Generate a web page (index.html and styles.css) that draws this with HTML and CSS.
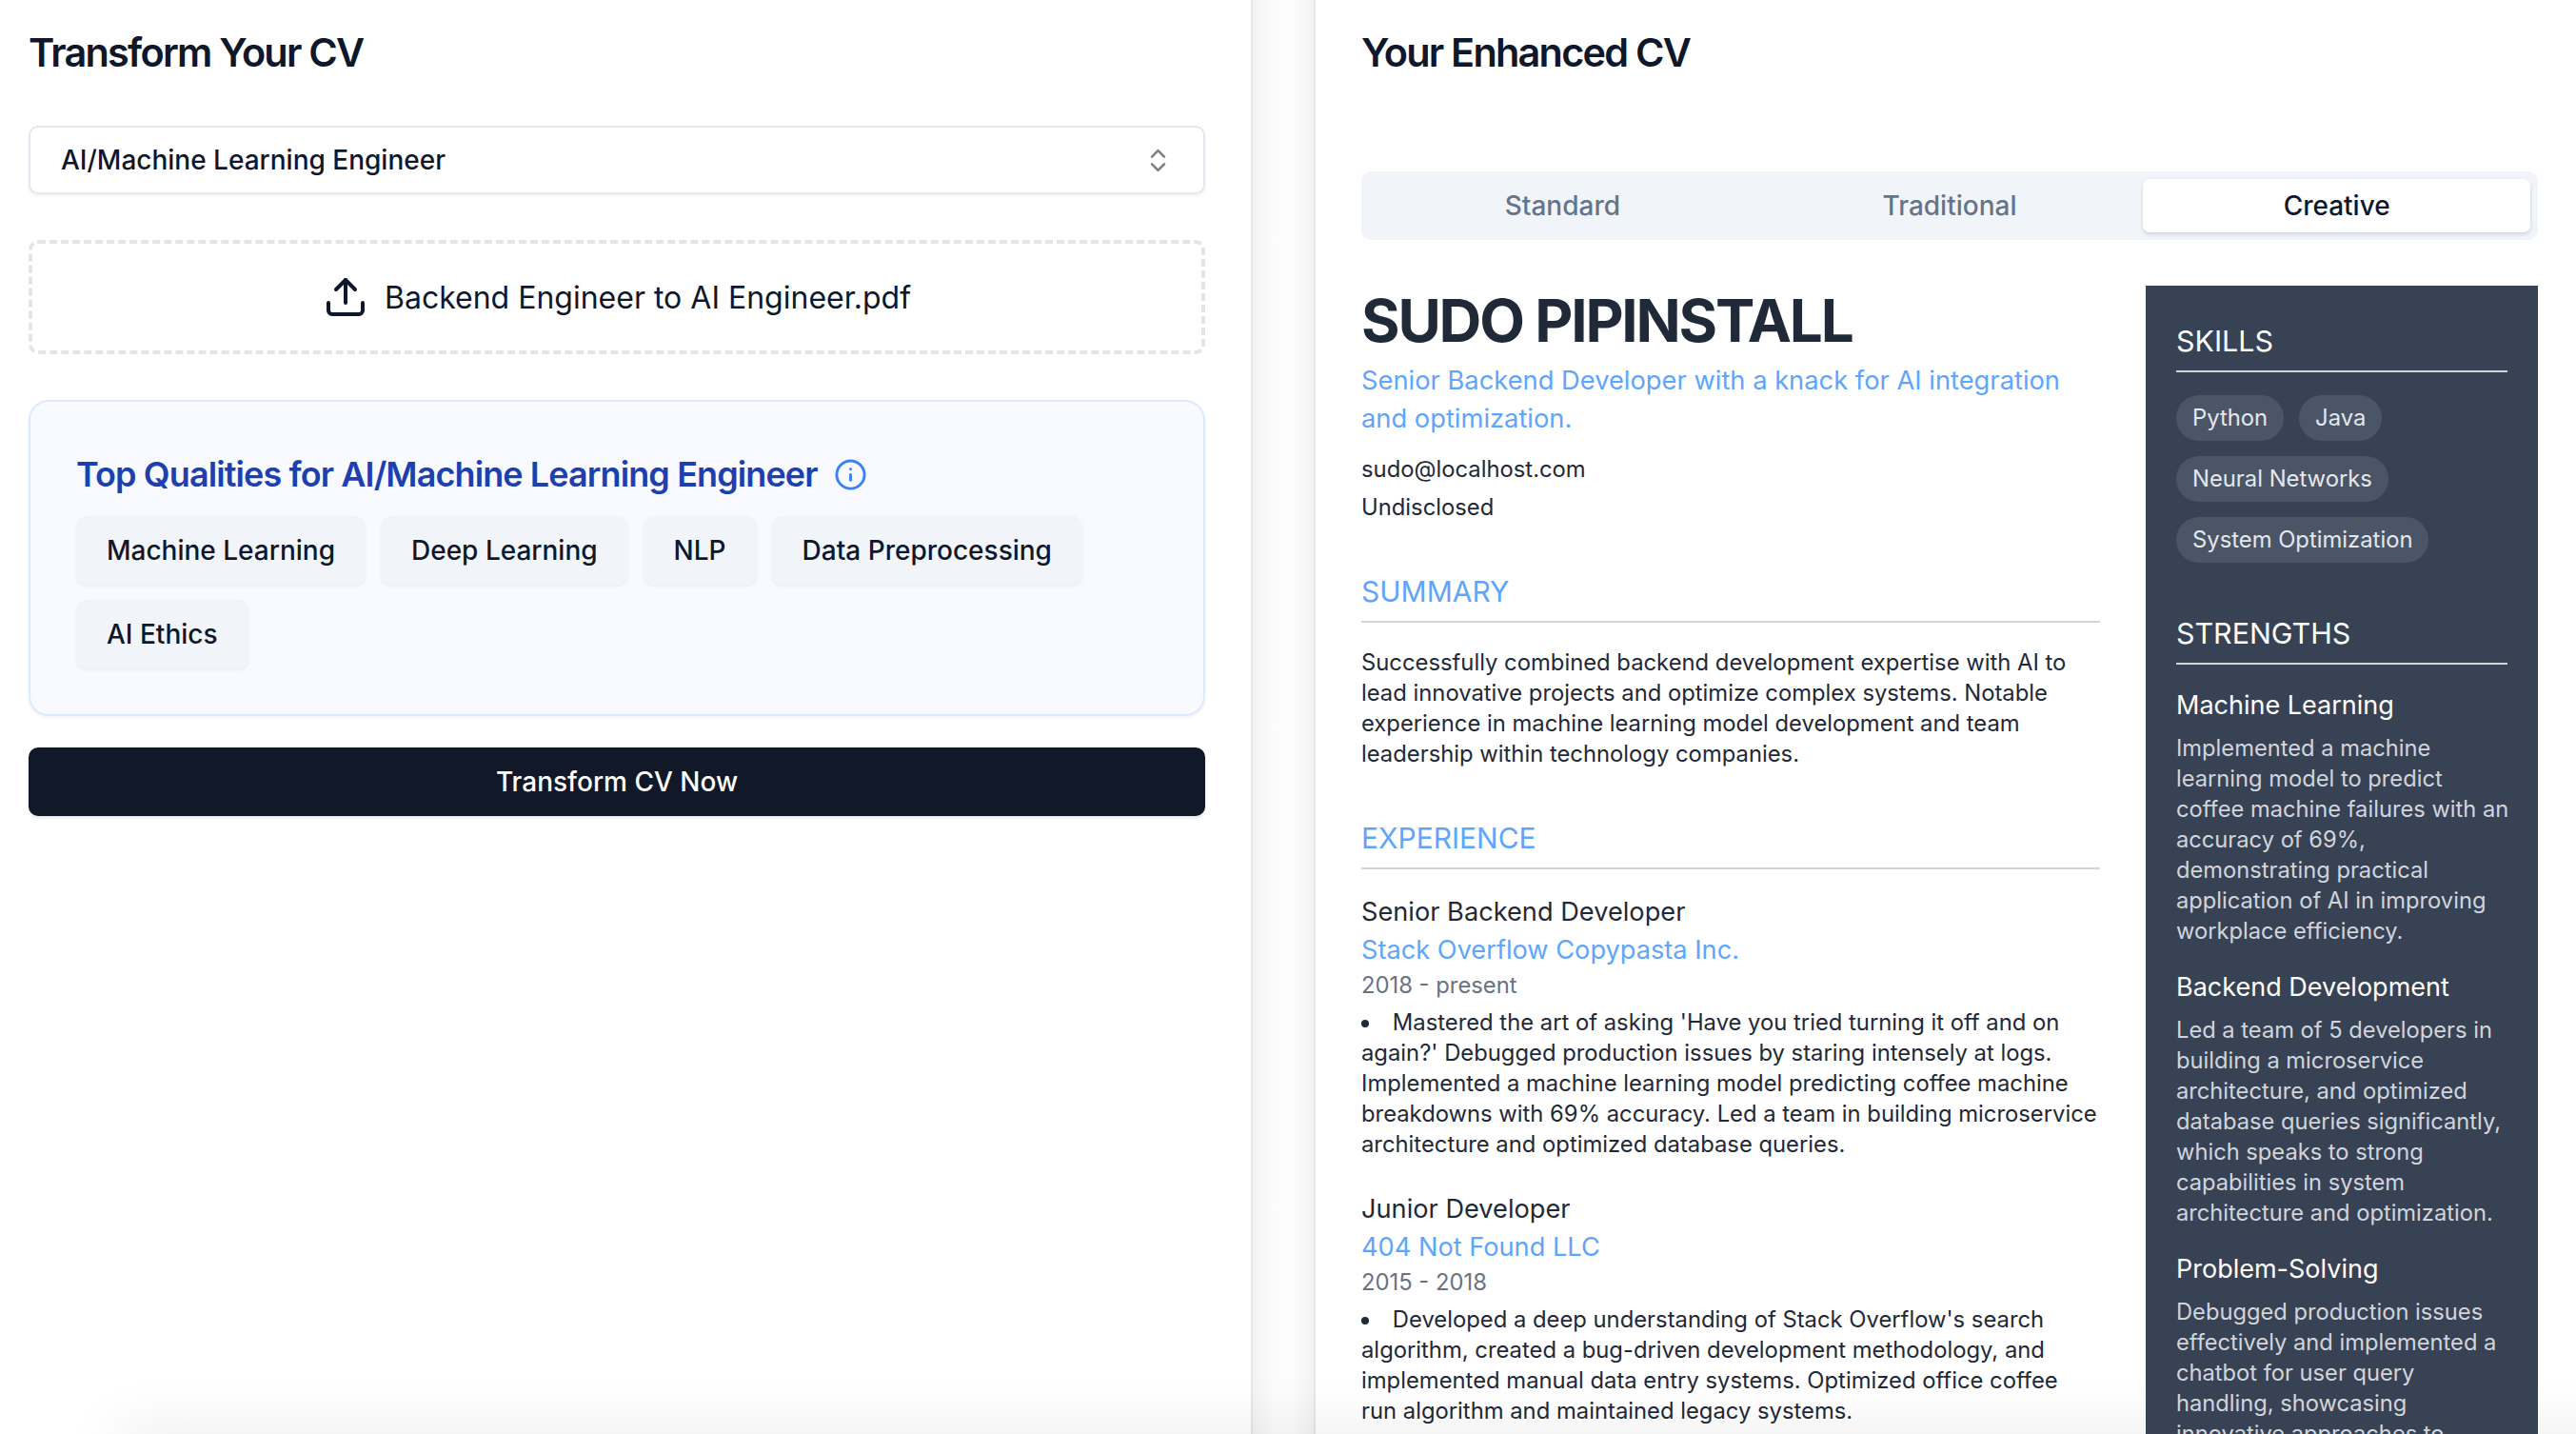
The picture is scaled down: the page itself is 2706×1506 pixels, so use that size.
FILE: index.html
```html
<!DOCTYPE html>
<html lang="en">
<head>
    <meta charset="UTF-8">
    <meta name="viewport" content="width=device-width, initial-scale=1.0">
    <title>Transform Your CV</title>
    <link rel="stylesheet" href="styles.css">
</head>
<body>

<div class="app">

    <!-- Input panel -->
    <section class="panel panel-left">
        <h2 class="panel-title">Transform Your CV</h2>

        <div class="role-select">
            <span>AI/Machine Learning Engineer</span>
            <svg class="icon-chevrons" viewBox="0 0 24 24" fill="none" stroke="currentColor" stroke-width="2" stroke-linecap="round" stroke-linejoin="round">
                <path d="m7 15 5 5 5-5"/>
                <path d="m7 9 5-5 5 5"/>
            </svg>
        </div>

        <div class="upload-box">
            <svg class="icon-upload" viewBox="0 0 24 24" fill="none" stroke="currentColor" stroke-width="2" stroke-linecap="round" stroke-linejoin="round">
                <path d="M21 15v4a2 2 0 0 1-2 2H5a2 2 0 0 1-2-2v-4"/>
                <polyline points="17 8 12 3 7 8"/>
                <line x1="12" y1="3" x2="12" y2="15"/>
            </svg>
            <span>Backend Engineer to AI Engineer.pdf</span>
        </div>

        <div class="qualities">
            <div class="qualities-head">
                <h3>Top Qualities for AI/Machine Learning Engineer</h3>
                <svg class="icon-info" viewBox="0 0 24 24" fill="none" stroke="currentColor" stroke-width="2" stroke-linecap="round" stroke-linejoin="round">
                    <circle cx="12" cy="12" r="10"/>
                    <path d="M12 16v-4"/>
                    <path d="M12 8h.01"/>
                </svg>
            </div>
            <div class="chips">
                <span class="chip">Machine Learning</span>
                <span class="chip">Deep Learning</span>
                <span class="chip">NLP</span>
                <span class="chip">Data Preprocessing</span>
                <span class="chip">AI Ethics</span>
            </div>
        </div>

        <button class="transform-btn">Transform CV Now</button>
    </section>

    <div class="gutter"></div>

    <!-- Result panel -->
    <section class="panel panel-right">
        <h2 class="panel-title">Your Enhanced CV</h2>

        <div class="tabs">
            <button class="tab">Standard</button>
            <button class="tab">Traditional</button>
            <button class="tab active">Creative</button>
        </div>

        <div class="cv">
            <div class="cv-main">
                <h1 class="cv-name">SUDO PIPINSTALL</h1>
                <p class="cv-tagline">Senior Backend Developer with a knack for AI integration and optimization.</p>
                <div class="cv-contact">
                    <p>sudo@localhost.com</p>
                    <p>Undisclosed</p>
                </div>

                <h4 class="cv-heading">SUMMARY</h4>
                <p class="cv-text">Successfully combined backend development expertise with AI to lead innovative projects and optimize complex systems. Notable experience in machine learning model development and team leadership within technology companies.</p>

                <h4 class="cv-heading">EXPERIENCE</h4>
                <div class="job">
                    <div class="job-title">Senior Backend Developer</div>
                    <div class="job-company">Stack Overflow Copypasta Inc.</div>
                    <div class="job-dates">2018 - present</div>
                    <ul class="job-points">
                        <li>Mastered the art of asking 'Have you tried turning it off and on again?' Debugged production issues by staring intensely at logs. Implemented a machine learning model predicting coffee machine breakdowns with 69% accuracy. Led a team in building microservice architecture and optimized database queries.</li>
                    </ul>
                </div>
                <div class="job">
                    <div class="job-title">Junior Developer</div>
                    <div class="job-company">404 Not Found LLC</div>
                    <div class="job-dates">2015 - 2018</div>
                    <ul class="job-points">
                        <li>Developed a deep understanding of Stack Overflow's search algorithm, created a bug-driven development methodology, and implemented manual data entry systems. Optimized office coffee<br>run algorithm and maintained legacy systems.</li>
                    </ul>
                </div>
            </div>

            <aside class="cv-side">
                <h4 class="side-heading">SKILLS</h4>
                <div class="pills">
                    <span class="pill">Python</span>
                    <span class="pill">Java</span>
                    <span class="pill">Neural Networks</span>
                    <span class="pill">System Optimization</span>
                </div>

                <h4 class="side-heading">STRENGTHS</h4>
                <div class="strength">
                    <h5>Machine Learning</h5>
                    <p>Implemented a machine learning model to predict coffee machine failures with an accuracy of 69%, demonstrating practical application of AI in improving workplace efficiency.</p>
                </div>
                <div class="strength">
                    <h5>Backend Development</h5>
                    <p>Led a team of 5 developers in building a microservice architecture, and optimized database queries significantly, which speaks to strong capabilities in system architecture and optimization.</p>
                </div>
                <div class="strength">
                    <h5>Problem-Solving</h5>
                    <p>Debugged production issues effectively and implemented a chatbot for user query handling, showcasing innovative approaches to problem resolution.</p>
                </div>
            </aside>
        </div>
    </section>

</div>

</body>
</html>
```

FILE: styles.css
```css
* {
    box-sizing: border-box;
}

html, body {
    margin: 0;
    padding: 0;
    height: 1506px;
    overflow: hidden;
    background-color: #fff;
}

body {
    font-family: Inter, "Noto Sans", sans-serif;
    color: #0f172a;
}

h1, h2, h3, h4, h5, p, ul {
    margin: 0;
    padding: 0;
}

.app {
    position: relative;
    display: flex;
    height: 1506px;
}

/* soft shadow rising from below the fold */
.app::after {
    content: "";
    position: absolute;
    z-index: 1;
    left: 125px;
    right: -120px;
    bottom: -34px;
    height: 30px;
    box-shadow: 0 0 65px rgba(0, 0, 0, 0.13);
}

.panel {
    height: 1506px;
    overflow: hidden;
    padding-top: 28px;
    background-color: #fff;
}

.panel-left {
    width: 1316px;
    flex-shrink: 0;
    padding-left: 30px;
    padding-right: 48px;
    border-right: 2px solid #e5e5ea;
}

.gutter {
    width: 64px;
    flex-shrink: 0;
    background: linear-gradient(to right, #f3f3f3, #fcfcfc 35%, #fcfcfc 65%, #f3f3f3);
}

.panel-right {
    flex: 1;
    padding-left: 48px;
    padding-right: 40px;
    border-left: 2px solid #e5e5ea;
}

.panel-title {
    font-size: 41.4px;
    line-height: 55px;
    font-weight: 600;
    letter-spacing: -1.75px;
    color: #0f172a;
}

/* Left panel */
.role-select {
    display: flex;
    align-items: center;
    justify-content: space-between;
    height: 72px;
    margin-top: 49px;
    padding: 0 32px;
    background-color: #fff;
    border: 2px solid #e2e8f0;
    border-radius: 10px;
    box-shadow: 0 2px 3px rgba(0, 0, 0, 0.05);
    font-size: 28px;
    font-weight: 500;
}

.icon-chevrons {
    width: 31px;
    height: 31px;
    color: #7c808a;
}

.upload-box {
    display: flex;
    align-items: center;
    justify-content: center;
    gap: 17px;
    height: 120px;
    margin-top: 48px;
    border: 4px dashed #e2e6eb;
    border-radius: 10px;
    font-size: 32px;
}

.icon-upload {
    width: 48px;
    height: 48px;
}

.qualities {
    margin-top: 48px;
    padding: 52px 48px 48px;
    background-color: #f8faff;
    border: 2px solid #dbeafe;
    border-radius: 21px;
    box-shadow: 0 2px 3px rgba(0, 0, 0, 0.05);
}

.qualities-head {
    display: flex;
    align-items: center;
    gap: 17px;
    height: 48px;
    margin-bottom: 20px;
}

.qualities-head h3 {
    font-size: 36px;
    font-weight: 600;
    letter-spacing: -0.025em;
    color: #1e40af;
}

.icon-info {
    width: 35px;
    height: 35px;
    color: #3b82f6;
}

.chips {
    display: flex;
    flex-wrap: wrap;
    gap: 16px;
}

.chip {
    height: 72px;
    padding: 0 32px;
    line-height: 72px;
    background-color: #f1f5f9;
    border-radius: 10px;
    box-shadow: 0 2px 3px rgba(0, 0, 0, 0.05);
    font-size: 28px;
    font-weight: 500;
    color: #0f172a;
}

.transform-btn {
    display: block;
    width: 100%;
    height: 72px;
    margin-top: 33px;
    border: none;
    border-radius: 10px;
    background-color: #111827;
    box-shadow: 0 2px 3px rgba(0, 0, 0, 0.1);
    font-family: inherit;
    font-size: 28px;
    font-weight: 500;
    color: #fff;
}

/* Tabs */
.tabs {
    display: grid;
    grid-template-columns: 1fr 1fr 1fr;
    height: 72px;
    margin-top: 97px;
    padding: 8px;
    background-color: #f1f5f9;
    border-radius: 10px;
}

.tab {
    border: none;
    border-radius: 7px;
    background: none;
    font-family: inherit;
    font-size: 28px;
    font-weight: 500;
    color: #64748b;
}

.tab.active {
    background-color: #fff;
    box-shadow: 0 2px 4px rgba(0, 0, 0, 0.15);
    color: #0f172a;
}

/* CV */
.cv {
    display: flex;
    gap: 48px;
    margin-top: 48px;
}

.cv-main {
    flex: 1;
    min-width: 0;
    color: #1f2937;
}

.cv-name {
    font-size: 62px;
    line-height: 69px;
    margin-top: 2px;
    font-weight: 700;
    letter-spacing: -2.2px;
    color: #1f2937;
}

.cv-tagline {
    margin-top: 9px;
    font-size: 27.3px;
    line-height: 40px;
    color: #60a5fa;
}

.cv-contact {
    margin-top: 17px;
    font-size: 23.8px;
    line-height: 32px;
}

.cv-contact p + p {
    margin-top: 8px;
}

.cv-heading {
    margin-top: 48px;
    padding-bottom: 7px;
    border-bottom: 2px solid #d1d5db;
    font-size: 30px;
    line-height: 48px;
    font-weight: 400;
    color: #60a5fa;
}

.cv-text {
    margin-top: 26px;
    font-size: 23.8px;
    line-height: 32px;
}

.job {
    margin-top: 32px;
}

.cv-heading + .job {
    margin-top: 25px;
}

.job-title, .job-company {
    font-size: 27.2px;
    line-height: 40px;
}

.job-company {
    color: #60a5fa;
}

.job-dates {
    padding-top: 1px;
    font-size: 23.8px;
    line-height: 32px;
    color: #6b7280;
}

.job-points {
    margin-top: 7px;
    list-style: inside disc;
    font-size: 23.8px;
    line-height: 32px;
}

/* Sidebar */
.cv-side {
    position: relative;
    z-index: 2;
    width: 412px;
    flex-shrink: 0;
    height: 1300px;
    padding: 34px 32px 32px;
    background-color: #384255;
    color: #fff;
}

.side-heading {
    padding-bottom: 7px;
    border-bottom: 2px solid #d1d5db;
    font-size: 30.4px;
    line-height: 48px;
    font-weight: 400;
}

.pills {
    display: flex;
    flex-wrap: wrap;
    gap: 16px;
    margin-top: 24px;
    margin-bottom: 50px;
}

.pill {
    height: 48px;
    padding: 0 17px;
    line-height: 48px;
    border-radius: 24px;
    background-color: #4a5568;
    font-size: 23.8px;
    color: #e5e7eb;
}

.strength {
    margin-top: 23px;
}

.strength h5 {
    font-size: 27px;
    line-height: 40px;
    font-weight: 400;
}

.strength p {
    margin-top: 9px;
    margin-right: -4px;
    font-size: 23.7px;
    line-height: 32px;
    color: #d1d5db;
}
```
